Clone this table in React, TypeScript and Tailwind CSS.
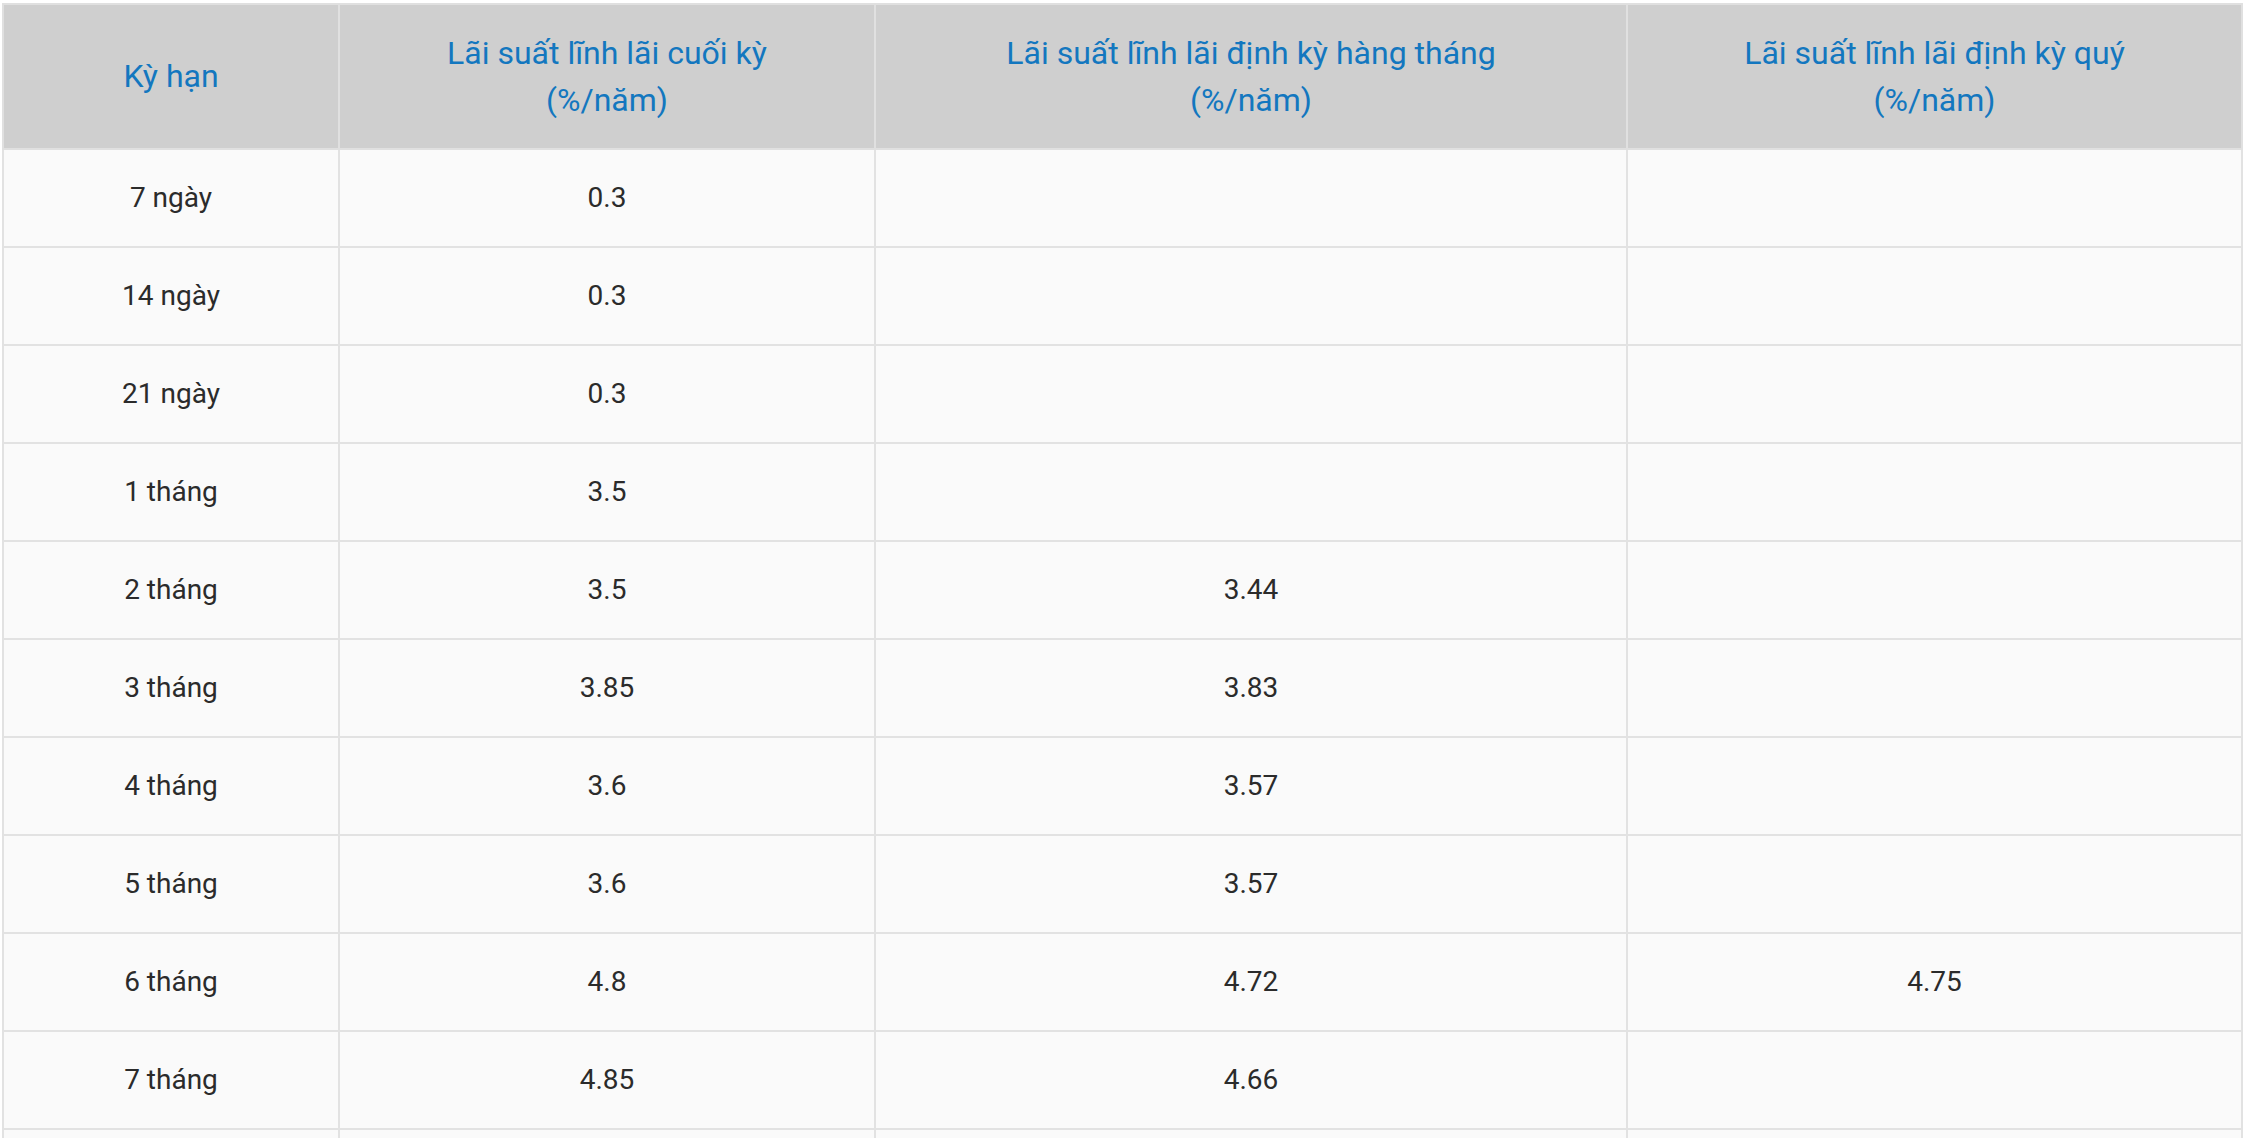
import React from "react";

type Row = { term: string; end: string; monthly?: string; quarterly?: string };

const rows: Row[] = [
  { term: "7 ngày", end: "0.3" },
  { term: "14 ngày", end: "0.3" },
  { term: "21 ngày", end: "0.3" },
  { term: "1 tháng", end: "3.5" },
  { term: "2 tháng", end: "3.5", monthly: "3.44" },
  { term: "3 tháng", end: "3.85", monthly: "3.83" },
  { term: "4 tháng", end: "3.6", monthly: "3.57" },
  { term: "5 tháng", end: "3.6", monthly: "3.57" },
  { term: "6 tháng", end: "4.8", monthly: "4.72", quarterly: "4.75" },
  { term: "7 tháng", end: "4.85", monthly: "4.66" },
  { term: "8 tháng", end: "4.85", monthly: "4.66" },
];

export default function App() {
  return (
    <div className="min-h-screen bg-white pt-[3px] pl-[2px] pr-[7px]" style={{ fontFamily: "Roboto, 'Noto Sans', Arial, sans-serif" }}>
      <table className="w-[2241px] table-fixed border-collapse border-2 border-[#e4e4e4]">
        <colgroup>
          <col className="w-[336px]" />
          <col className="w-[536px]" />
          <col className="w-[752px]" />
          <col />
        </colgroup>
        <thead>
          <tr className="h-[145px] bg-[#cfcfcf] text-[32px] leading-[47px] text-[#1377bf]">
            <th className="border-2 border-[#e0e0e0] font-normal">Kỳ hạn</th>
            <th className="border-2 border-[#e0e0e0] font-normal">
              Lãi suất lĩnh lãi cuối kỳ
              <br />
              (%/năm)
            </th>
            <th className="border-2 border-[#e0e0e0] font-normal">
              Lãi suất lĩnh lãi định kỳ hàng tháng
              <br />
              (%/năm)
            </th>
            <th className="border-2 border-[#e0e0e0] font-normal">
              Lãi suất lĩnh lãi định kỳ quý
              <br />
              (%/năm)
            </th>
          </tr>
        </thead>
        <tbody>
          {rows.map((r) => (
            <tr key={r.term} className="h-[98px] bg-[#fafafa] text-center text-[28px] text-[#2b2b2b]">
              <td className="border-2 border-[#e2e2e2]">{r.term}</td>
              <td className="border-2 border-[#e2e2e2]">{r.end}</td>
              <td className="border-2 border-[#e2e2e2]">{r.monthly ?? ""}</td>
              <td className="border-2 border-[#e2e2e2]">{r.quarterly ?? ""}</td>
            </tr>
          ))}
        </tbody>
      </table>
    </div>
  );
}
